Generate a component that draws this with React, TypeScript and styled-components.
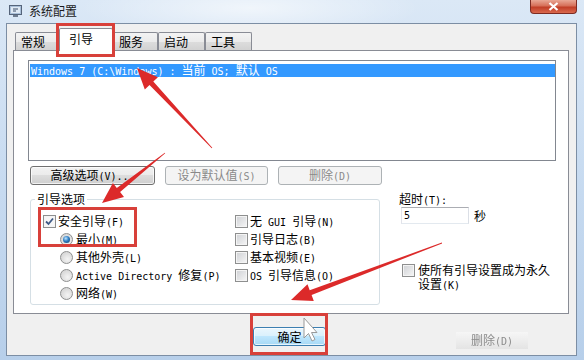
import React from 'react';
import styled, { createGlobalStyle } from 'styled-components';

const GlobalStyle = createGlobalStyle`
    html, body {
        margin: 0;
        padding: 0;
    }
    body {
        font-family: "Noto Sans CJK SC", sans-serif;
        font-size: 12px;
        color: #000;
        background: #fff;
    }
`;

const Window = styled.div`
    position: relative;
    width: 584px;
    height: 360px;
    display: flex;
    flex-direction: column;
    overflow: hidden;
    background:
        radial-gradient(ellipse 170px 30px at 250px 8px, rgba(255, 255, 255, 0.6), transparent),
        linear-gradient(to bottom, #dbe8f6 0%, #c9dcf1 45%, #b7cfea 100%);
`;

const TitleBar = styled.div`
    height: 23px;
    flex-shrink: 0;
    display: flex;
    align-items: flex-start;
`;

const AppIcon = styled.svg`
    margin: 5px 0 0 9px;
    flex-shrink: 0;
`;

const Title = styled.div`
    margin-left: 6px;
    line-height: 22px;
    font-size: 12px;
    color: #1a1a1a;
`;

const CloseButton = styled.div`
    margin-left: auto;
    margin-right: 7px;
    width: 47px;
    height: 14px;
    box-sizing: border-box;
    border: 1px solid #7d2b22;
    border-top: none;
    border-radius: 0 0 4px 4px;
    background: linear-gradient(to bottom, #e9a795 0%, #d66f58 45%, #c13e27 55%, #d9694e 100%);
    display: flex;
    align-items: center;
    justify-content: center;
`;

const Client = styled.div`
    flex: 1;
    margin: 0 7px 4px 6px;
    border: 1px solid #7c8ea4;
    background: #f0f0f0;
    display: flex;
    flex-direction: column;
`;

const TabStrip = styled.div`
    position: relative;
    z-index: 1;
    height: 22px;
    margin-top: 4px;
    padding-left: 8px;
    display: flex;
    align-items: flex-end;
`;

const Tab = styled.div<{ $w: number; $active?: boolean }>`
    width: ${p => p.$w}px;
    height: ${p => (p.$active ? 23 : 18)}px;
    margin-bottom: ${p => (p.$active ? -1 : 0)}px;
    box-sizing: border-box;
    border: 1px solid #898c95;
    border-bottom: none;
    border-radius: 2px 2px 0 0;
    padding-left: ${p => (p.$active ? 9 : 5)}px;
    padding-bottom: ${p => (p.$active ? 2 : 0)}px;
    background: ${p =>
        p.$active ? '#ffffff' : 'linear-gradient(to bottom, #f3f3f3 0%, #ebebeb 50%, #dddddd 50%, #d2d2d2 100%)'};
    display: flex;
    align-items: center;
    font-size: 12px;
    line-height: 1;
`;

const Panel = styled.div`
    margin: 0 7px 0 6px;
    height: 264px;
    box-sizing: border-box;
    border: 1px solid #898c95;
    background: #ffffff;
    padding: 9px 12px 0 14px;
    display: flex;
    flex-direction: column;
`;

const ListBox = styled.div`
    height: 101px;
    box-sizing: border-box;
    border: 1px solid #828790;
    background: #fff;
`;

const ListRow = styled.div<{ $selected?: boolean }>`
    margin: 3px 0 0 1px;
    height: 13px;
    padding-left: 1px;
    display: flex;
    align-items: center;
    background: ${p => (p.$selected ? '#3399ff' : 'transparent')};
    color: ${p => (p.$selected ? '#ffffff' : '#000')};
    line-height: 1;
`;

const ButtonRow = styled.div`
    margin-top: 5px;
    padding-left: 2px;
    display: flex;
    gap: 10px;
`;

const Button = styled.div<{ $w: number; $disabled?: boolean; $default?: boolean }>`
    width: ${p => p.$w}px;
    height: 19px;
    box-sizing: border-box;
    border: 1px solid ${p => (p.$disabled ? '#adb2b5' : p.$default ? '#3c7fb1' : '#707070')};
    border-radius: 3px;
    background: ${p =>
        p.$disabled
            ? '#f4f4f4'
            : p.$default
            ? 'linear-gradient(to bottom, #eaf6fd 0%, #d9f0fc 50%, #bee6fd 50%, #a7d9f5 100%)'
            : 'linear-gradient(to bottom, #f2f2f2 0%, #ebebeb 50%, #dddddd 50%, #cfcfcf 100%)'};
    box-shadow: inset 0 0 0 1px ${p => (p.$disabled ? '#f4f4f4' : 'rgba(255,255,255,0.7)')};
    color: ${p => (p.$disabled ? '#8a8a8a' : '#000')};
    display: flex;
    align-items: center;
    justify-content: center;
    line-height: 1;
`;

const Lower = styled.div`
    margin-top: 7px;
    display: flex;
    align-items: flex-start;
`;

const Group = styled.fieldset`
    margin: 0 0 0 2px;
    width: 353px;
    height: 113px;
    box-sizing: border-box;
    border: 1px solid #d5dfe5;
    border-radius: 3px;
    padding: 6px 0 0 12px;
    display: flex;
    min-width: 0;
`;

const Legend = styled.legend`
    margin-left: -8px;
    padding: 0 2px;
    height: 14px;
    line-height: 14px;
    font-size: 12px;
`;

const Column = styled.div<{ $w?: number }>`
    width: ${p => (p.$w ? `${p.$w}px` : 'auto')};
    display: flex;
    flex-direction: column;
`;

const OptionRow = styled.div<{ $indent?: number }>`
    height: 18px;
    padding-left: ${p => p.$indent || 0}px;
    display: flex;
    align-items: center;
    gap: 2px;
    line-height: 1;
`;

const CheckBox = styled.span<{ $checked?: boolean }>`
    width: 13px;
    height: 13px;
    flex-shrink: 0;
    box-sizing: border-box;
    border: 1px solid #8e8f8f;
    background: ${p =>
        p.$checked ? '#f6f6f6' : 'linear-gradient(135deg, #cfd1d4 0%, #e4e5e7 55%, #f7f7f7 100%)'};
    box-shadow: inset 0 0 0 1px #f4f4f4;
    display: flex;
    align-items: center;
    justify-content: center;
`;

const Radio = styled.span<{ $checked?: boolean }>`
    width: 13px;
    height: 13px;
    flex-shrink: 0;
    margin-right: 1px;
    box-sizing: border-box;
    border-radius: 50%;
    border: 1px solid #8e8f8f;
    background: radial-gradient(circle at 60% 65%, #f4f4f4 0%, #dcdcdc 60%, #cfcfcf 100%);
    display: flex;
    align-items: center;
    justify-content: center;

    &::after {
        content: '';
        display: ${p => (p.$checked ? 'block' : 'none')};
        width: 7px;
        height: 7px;
        border-radius: 50%;
        background: radial-gradient(circle at 40% 35%, #bfe4ff 0%, #2f7fc4 45%, #0f3b63 100%);
    }
`;

const SidePane = styled.div`
    margin-left: 19px;
    display: flex;
    flex-direction: column;
`;

const FieldLabel = styled.div`
    height: 14px;
    display: flex;
    align-items: center;
    line-height: 1;
`;

const TimeoutRow = styled.div`
    margin-top: 1px;
    padding-left: 2px;
    display: flex;
    align-items: center;
    gap: 5px;
    line-height: 1;
`;

const TextBox = styled.input`
    width: 68px;
    height: 17px;
    box-sizing: border-box;
    margin: 0;
    padding: 0 0 0 2px;
    border: 1px solid;
    border-color: #abadb3 #dbdfe6 #e3e9ef #e2e3ea;
    background: #fff;
    font-family: "DejaVu Sans Mono", "Liberation Mono", monospace;
    font-size: 10px;
    color: #000;
    outline: none;
`;

const PermanentRow = styled.div`
    margin-top: 40px;
    padding-left: 3px;
    display: flex;
    align-items: flex-start;
    gap: 3px;
`;

const WrapText = styled.div`
    width: 138px;
    margin-top: -1px;
    line-height: 14px;
`;

const BottomBar = styled.div`
    flex: 1;
    padding: 13px 0 0 246px;
    display: flex;
    align-items: flex-start;
`;

const GhostButton = styled.div`
    margin: 5px 0 0 130px;
    width: 72px;
    height: 17px;
    background: linear-gradient(to bottom, #f6f6f6, #e4e4e4);
    box-shadow: 0 0 4px 2px #f0f0f0;
    color: #8c8c8c;
    display: flex;
    align-items: center;
    justify-content: center;
    filter: blur(0.3px);
    line-height: 1;
`;

const Overlay = styled.svg`
    position: absolute;
    left: 0;
    top: 0;
    pointer-events: none;
    z-index: 5;
`;

const TextRun = styled.span`
    white-space: nowrap;
`;

const WrapRun = styled.span`
    white-space: normal;
`;

const Latin = styled.span`
    font-family: "DejaVu Sans Mono", "Liberation Mono", monospace;
    font-size: 10px;
    white-space: pre;
`;

const Han = styled.span`
    font-family: "Noto Sans CJK SC", sans-serif;
    font-size: 12px;
`;

const HAN_RE = /([\u2E80-\u9FFF\u3000-\u303F\uFF00-\uFFEF]+)/;

// SimSun-style mix: monospace Latin, full width Han, kept in one inline run
const Mixed: React.FC<{ text: string; wrap?: boolean }> = ({ text, wrap }) => {
    const parts = text.split(HAN_RE).map((part, i) =>
        i % 2 === 1 ? <Han key={i}>{part}</Han> : part ? <Latin key={i}>{part}</Latin> : null
    );
    return wrap ? <WrapRun>{parts}</WrapRun> : <TextRun>{parts}</TextRun>;
};

const arrowPoints = (tx: number, ty: number, hx: number, hy: number) => {
    const len = Math.hypot(hx - tx, hy - ty);
    const dx = (hx - tx) / len;
    const dy = (hy - ty) / len;
    const nx = -dy;
    const ny = dx;
    const headLen = 21;
    const headW = 9;
    const shaft = 2.6;
    const tail = 0.4;
    const bx = hx - dx * headLen;
    const by = hy - dy * headLen;
    const pts = [
        [tx + nx * tail, ty + ny * tail],
        [bx + nx * shaft, by + ny * shaft],
        [bx + nx * headW, by + ny * headW],
        [hx, hy],
        [bx - nx * headW, by - ny * headW],
        [bx - nx * shaft, by - ny * shaft],
        [tx - nx * tail, ty - ny * tail],
    ];
    return pts.map(p => `${p[0].toFixed(1)},${p[1].toFixed(1)}`).join(' ');
};

const tabs = [
    { label: '常规', w: 44 },
    { label: '引导', w: 54, active: true },
    { label: '服务', w: 45 },
    { label: '启动', w: 47 },
    { label: '工具', w: 47 },
];

const Tick = () => (
    <svg width="9" height="9" viewBox="0 0 9 9">
        <path d="M1 4.5 L3.5 7 L8 1.5" fill="none" stroke="#3e5a86" strokeWidth="1.8" />
    </svg>
);

export default function App() {
    const red = '#d8403a';
    return (
        <Window>
            <GlobalStyle />
            <TitleBar>
                <AppIcon width="14" height="13" viewBox="0 0 14 13">
                    <rect x="0.5" y="0.5" width="12" height="9" fill="#a9bfd8" stroke="#55647a" />
                    <rect x="2" y="2" width="9" height="6" fill="#dfe9f4" />
                    <path d="M4 4 h5 M4 6 h3" stroke="#3d4f68" strokeWidth="1" />
                    <rect x="4" y="10" width="5" height="2" fill="#6e7c8f" />
                </AppIcon>
                <Title>系统配置</Title>
                <CloseButton>
                    <svg width="11" height="9" viewBox="0 0 11 9">
                        <path d="M1.5 1 L9.5 8 M9.5 1 L1.5 8" stroke="#ffffff" strokeWidth="2.2" />
                    </svg>
                </CloseButton>
            </TitleBar>

            <Client>
                <TabStrip>
                    {tabs.map(t => (
                        <Tab key={t.label} $w={t.w} $active={t.active}>
                            {t.label}
                        </Tab>
                    ))}
                </TabStrip>

                <Panel>
                    <ListBox>
                        <ListRow $selected>
                            <Mixed text={'Windows 7 (C:\\Windows) : 当前 OS; 默认 OS'} />
                        </ListRow>
                    </ListBox>

                    <ButtonRow>
                        <Button $w={125}>
                            <Mixed text="高级选项(V)..." />
                        </Button>
                        <Button $w={103} $disabled>
                            <Mixed text="设为默认值(S)" />
                        </Button>
                        <Button $w={104} $disabled>
                            <Mixed text="删除(D)" />
                        </Button>
                    </ButtonRow>

                    <Lower>
                        <Group>
                            <Legend>引导选项</Legend>
                            <Column $w={192}>
                                <OptionRow>
                                    <CheckBox $checked>
                                        <Tick />
                                    </CheckBox>
                                    <Mixed text="安全引导(F)" />
                                </OptionRow>
                                <OptionRow $indent={17}>
                                    <Radio $checked />
                                    <Mixed text="最小(M)" />
                                </OptionRow>
                                <OptionRow $indent={17}>
                                    <Radio />
                                    <Mixed text="其他外壳(L)" />
                                </OptionRow>
                                <OptionRow $indent={17}>
                                    <Radio />
                                    <Mixed text="Active Directory 修复(P)" />
                                </OptionRow>
                                <OptionRow $indent={17}>
                                    <Radio />
                                    <Mixed text="网络(W)" />
                                </OptionRow>
                            </Column>
                            <Column>
                                <OptionRow>
                                    <CheckBox />
                                    <Mixed text="无 GUI 引导(N)" />
                                </OptionRow>
                                <OptionRow>
                                    <CheckBox />
                                    <Mixed text="引导日志(B)" />
                                </OptionRow>
                                <OptionRow>
                                    <CheckBox />
                                    <Mixed text="基本视频(E)" />
                                </OptionRow>
                                <OptionRow>
                                    <CheckBox />
                                    <Mixed text="OS 引导信息(O)" />
                                </OptionRow>
                            </Column>
                        </Group>

                        <SidePane>
                            <FieldLabel>
                                <Mixed text="超时(T):" />
                            </FieldLabel>
                            <TimeoutRow>
                                <TextBox readOnly value="5" />
                                <Han>秒</Han>
                            </TimeoutRow>
                            <PermanentRow>
                                <CheckBox />
                                <WrapText>
                                    <Mixed wrap text="使所有引导设置成为永久设置(K)" />
                                </WrapText>
                            </PermanentRow>
                        </SidePane>
                    </Lower>
                </Panel>

                <BottomBar>
                    <Button $w={73} $default>
                        确定
                    </Button>
                    <GhostButton>
                        <Mixed text="删除(D)" />
                    </GhostButton>
                </BottomBar>
            </Client>

            <Overlay width="584" height="360" viewBox="0 0 584 360">
                <rect x="57.5" y="24.5" width="56" height="31" fill="none" stroke={red} strokeWidth="3" />
                <rect x="39.5" y="208.5" width="96" height="37" fill="none" stroke={red} strokeWidth="3" />
                <rect x="251.5" y="314.5" width="75" height="39" fill="none" stroke={red} strokeWidth="3" />
                <polygon points={arrowPoints(212, 148, 137, 68)} fill="#dc2a2a" />
                <polygon points={arrowPoints(165, 153, 102, 203)} fill="#dc2a2a" />
                <polygon points={arrowPoints(442, 243, 291, 300)} fill="#dc2a2a" />
                <path
                    d="M304 318 L304 338 L308.5 333.5 L312 341 L315 339.5 L311.5 332.5 L317 332.5 Z"
                    fill="#ffffff"
                    stroke="#9a9a9a"
                    strokeWidth="1"
                />
            </Overlay>
        </Window>
    );
}
